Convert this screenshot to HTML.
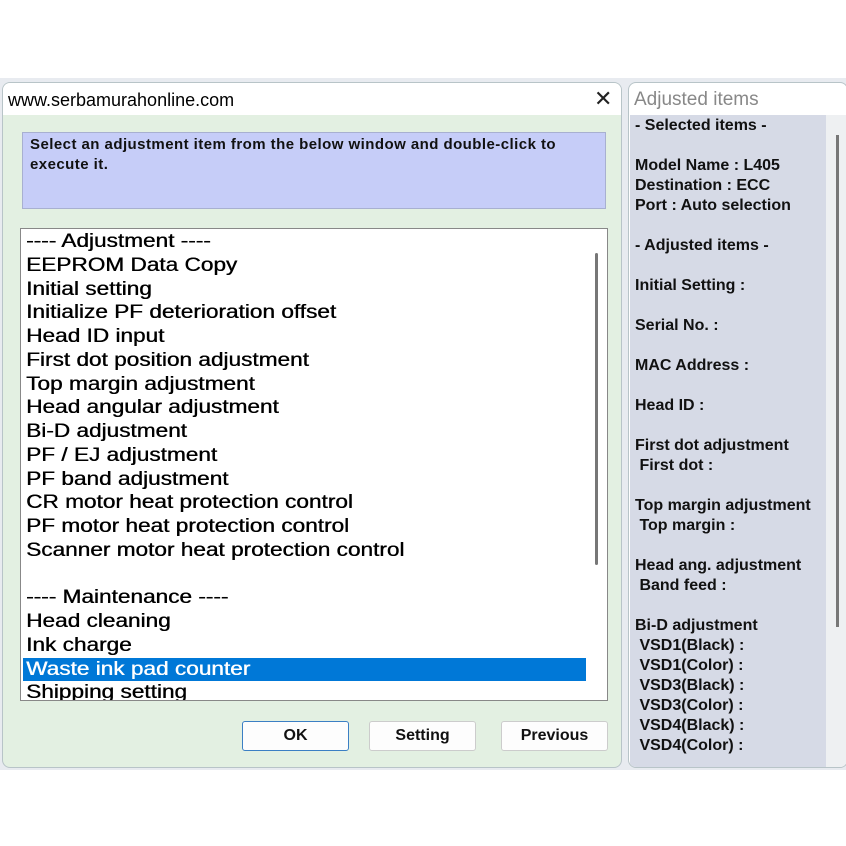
<!DOCTYPE html>
<html><head><meta charset="utf-8"><style>
*{margin:0;padding:0;box-sizing:border-box}
body{width:846px;height:846px;background:#fff;position:relative;overflow:hidden;font-family:"Liberation Sans",sans-serif}
.abs{position:absolute}
#bg{left:0;top:78px;width:846px;height:692px;background:#e8ebf0}
#win{left:2px;top:82px;width:620px;height:686px;background:#e3f0e2;border:1px solid #b8c4c8;border-radius:8px 8px 8px 8px;overflow:hidden}
#tb{left:0;top:0;width:620px;height:32px;background:#fff}
#tb span{position:absolute;left:5px;top:7px;font-size:18px;color:#000}
#x{position:absolute;left:591px;top:3px;font-size:22px;color:#222}
#info{left:19px;top:49px;width:584px;height:77px;background:#c6cdf8;border:1px solid #a8b0d0;font-weight:bold;font-size:15px;letter-spacing:0.45px;padding:2px 7px;line-height:20px;color:#111}
#list{left:17px;top:145px;width:588px;height:473px;background:#fff;border:1px solid #888;overflow:hidden}
#list div{position:absolute;left:5px;font-size:19px;color:#000;white-space:nowrap;transform:scaleX(1.19);transform-origin:left;text-shadow:0.4px 0 0 currentColor}
#sb{left:574px;top:24px;width:3px;height:312px;background:#777;border-radius:2px}
#sel{left:2px;top:429px;width:563px;height:23px;background:#0078d7}
.btn{top:638px;height:30px;width:107px;background:#fdfdfd;border:1px solid #ccc;border-radius:3px;font-weight:bold;font-size:16px;text-align:center;line-height:28px;color:#111}
#rp{left:628px;top:82px;width:220px;height:686px;background:#fff;border:1px solid #b8c4c8;border-radius:8px;overflow:hidden}
#rt{position:absolute;left:5px;top:6px;font-size:19px;color:#888}
#rb{position:absolute;left:1px;top:32px;width:196px;height:660px;background:#d6dae6}
#rs{position:absolute;left:197px;top:32px;width:22px;height:660px;background:#eef0f2}
#rsb{position:absolute;left:207px;top:52px;width:3px;height:492px;background:#777}
#rtext{position:absolute;left:6px;top:33px;font-weight:bold;font-size:16px;line-height:20px;color:#111;white-space:pre}
</style></head><body>
<div id="bg" class="abs"></div>
<div id="win" class="abs">
<div id="tb" class="abs"><span>www.serbamurahonline.com</span><div id="x">✕</div></div>
<div id="info" class="abs">Select an adjustment item from the below window and double-click to execute it.</div>
<div id="list" class="abs">
<div id="sel" class="abs" style="left:2px;transform:none"></div>
<div style="top:2px">---- Adjustment ----</div>
<div style="top:26px">EEPROM Data Copy</div>
<div style="top:50px">Initial setting</div>
<div style="top:73px">Initialize PF deterioration offset</div>
<div style="top:97px">Head ID input</div>
<div style="top:121px">First dot position adjustment</div>
<div style="top:145px">Top margin adjustment</div>
<div style="top:168px">Head angular adjustment</div>
<div style="top:192px">Bi-D adjustment</div>
<div style="top:216px">PF / EJ adjustment</div>
<div style="top:240px">PF band adjustment</div>
<div style="top:263px">CR motor heat protection control</div>
<div style="top:287px">PF motor heat protection control</div>
<div style="top:311px">Scanner motor heat protection control</div>
<div style="top:358px">---- Maintenance ----</div>
<div style="top:382px">Head cleaning</div>
<div style="top:406px">Ink charge</div>
<div style="top:430px;color:#fff">Waste ink pad counter</div>
<div style="top:453px">Shipping setting</div>
<div id="sb" class="abs" style="left:574px;transform:none;text-shadow:none"></div>
</div>
<div class="btn abs" style="left:239px;border-color:#3b7fc4">OK</div>
<div class="btn abs" style="left:366px">Setting</div>
<div class="btn abs" style="left:498px">Previous</div>
</div>
<div id="rp" class="abs">
<div id="rt">Adjusted items</div>
<div id="rb"></div><div id="rs"></div><div id="rsb"></div>
<div id="rtext">- Selected items -

Model Name : L405
Destination : ECC
Port : Auto selection

- Adjusted items -

Initial Setting :

Serial No. :

MAC Address :

Head ID :

First dot adjustment
 First dot :

Top margin adjustment
 Top margin :

Head ang. adjustment
 Band feed :

Bi-D adjustment
 VSD1(Black) :
 VSD1(Color) :
 VSD3(Black) :
 VSD3(Color) :
 VSD4(Black) :
 VSD4(Color) :</div>
</div>
</body></html>
